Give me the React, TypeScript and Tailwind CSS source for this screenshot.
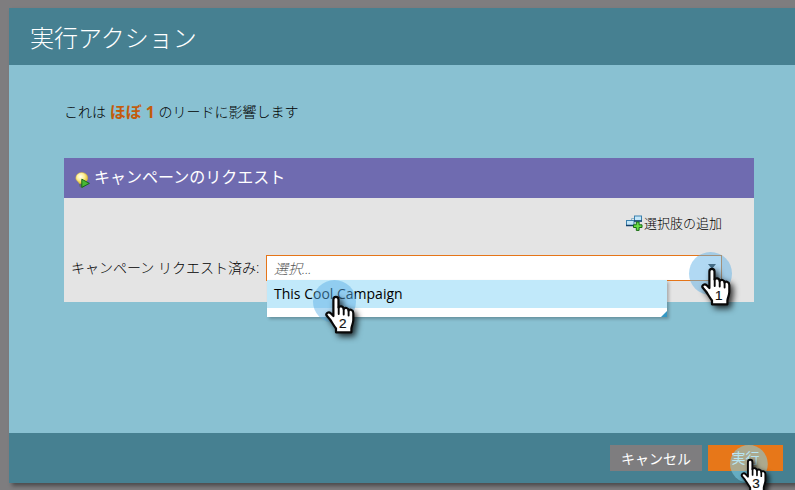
import React from "react";

const FONT = "font-['Open_Sans','Noto_Sans_CJK_JP',sans-serif]";

function Pointer({ step, className, small = false }: { step: string; className: string; small?: boolean }) {
  const size = small ? 58 : 66;
  return (
    <svg
      className={`pointer-events-none absolute overflow-visible ${className}`}
      width={size}
      height={size}
      viewBox="0 0 66 66"
      aria-hidden="true"
    >
      <circle cx="21.5" cy="21.5" r="21.5" fill={small ? "#7fd0ea" : "#5db0e6"} fillOpacity={small ? 0.56 : 0.48} />
      <g transform="translate(11 15)">
        <g className="drop-shadow-[3px_3px_3px_rgba(0,0,0,0.8)]">
          <path
            d="M9.4 21V4.5C9.4 1 14.5 1 14.5 4.5V12.5C15.5 10.6 19.4 11 19.6 14C21 12.2 24.3 12.7 24.6 15.6C26 14 29.3 14.6 29.3 18V25C29.3 28.5 27.6 30.5 27.4 33.5V37.3H12V33.5C9.5 30.5 7.8 27 6 24.5L2.8 20.8C1.2 18.5 4.5 16 6.7 18.2Z"
            fill="#fff"
            stroke="#080808"
            strokeWidth="2.2"
            strokeLinejoin="round"
          />
        </g>
        <path d="M14.7 12V19M19.7 14V19.5M24.6 15.5V20.5" fill="none" stroke="#080808" strokeWidth="1.9" strokeLinecap="round" />
        <text x="18.7" y={small ? 34 : 33} textAnchor="middle" fontSize={small ? 15.5 : 13.5} className="font-['Liberation_Sans',sans-serif]" fill="#111" stroke="#111" strokeWidth="0.2">
          {step}
        </text>
      </g>
    </svg>
  );
}

function BulbIcon() {
  return (
    <svg width="16" height="16" viewBox="0 0 16 16" className="shrink-0" aria-hidden="true">
      <defs>
        <radialGradient id="bulb" cx="40%" cy="38%" r="62%">
          <stop offset="0" stopColor="#fffff2" />
          <stop offset="0.5" stopColor="#fcf09a" />
          <stop offset="1" stopColor="#e3c02f" />
        </radialGradient>
      </defs>
      <path d="M4.200 10.500h5.300v3.800L8 15.700H6l-1.800-1.400z" fill="#656a72" />
      <path d="M6.700 .4a6 5.600 0 0 1 6 5.600c0 2.600-2 3.300-3 5.500H4.200C3.500 9.300 .8 8.600 .8 6A6 5.600 0 0 1 6.700 .4z" fill="url(#bulb)" stroke="#dbb93f" strokeWidth=".5" />
      <path d="M6.800 7.200l7.600 4.200-7.600 4z" fill="#48b835" stroke="#16681a" strokeWidth="1" />
    </svg>
  );
}

function AddChoiceIcon() {
  return (
    <svg width="17" height="16" viewBox="0 0 17 16" className="shrink-0" aria-hidden="true">
      <path d="M5.500 6V3.500H8" fill="none" stroke="#8fb3c8" />
      <rect x="8.500" y="1" width="7" height="5" fill="#c4e6f8" stroke="#3a80ad" />
      <rect x=".5" y="5.500" width="7.500" height="5" fill="#c4e6f8" stroke="#3a80ad" />
      <path d="M8 6h8M0 10.500h8" stroke="#123f69" strokeWidth="1.500" />
      <path d="M10.300 7h2.800v2.800H16v2.700h-2.900v2.900h-2.800v-2.900H7.500V9.800h2.800z" fill="#6bdd43" stroke="#176b14" />
    </svg>
  );
}

export default function App() {
  return (
    <div className={`relative h-[490px] w-[795px] overflow-hidden bg-[#7e7d7f] pl-[9px] pt-2 ${FONT}`}>
      <div className="flex h-[475px] w-[800px] flex-col bg-[#89c1d2] shadow-[3px_3px_4px_rgba(0,0,0,0.4)]">
        <header className="flex h-[57px] shrink-0 items-center bg-[#468091] pl-[21px] pt-[3px] text-white">
          <h1 className="text-[24px] font-light leading-9">実行アクション</h1>
        </header>

        <main className="flex-1 pl-[55px] pt-[35px] text-[14px] text-black">
          <p className="flex h-6 items-center whitespace-pre leading-6">
            <span className="font-light">これは </span>
            <strong className="text-[16px] font-bold text-[#c45b0b]">ほぼ 1</strong>
            <span className="font-light"> のリードに影響します</span>
          </p>

          <section className="mt-[34px] h-[144px] w-[690px] bg-[#e4e4e4]">
            <h2 className="flex h-10 items-center gap-[3px] bg-[#6f6bb0] pl-[11px] text-[16px] font-normal text-white">
              <span className="pt-[3px]"><BulbIcon /></span>
              <span className="pb-0.5">キャンペーンのリクエスト</span>
            </h2>
            <div className="flex h-[57px] items-start justify-end pr-8 pt-[15px]">
              <button className="flex h-5 items-center gap-px text-[13px] font-light leading-5">
                <AddChoiceIcon />
                選択肢の追加
              </button>
            </div>
            <div className="flex h-[26px] items-center pl-[7px]">
              <label className="w-[195px] shrink-0 whitespace-nowrap font-light leading-5">キャンペーン リクエスト済み:</label>
              <div className="relative flex h-[26px] w-[456px] items-center justify-between border border-[#e57519] bg-white pl-[7px] pr-[5px]">
                <span className="font-light italic text-[#555]">選択...</span>
                <span className="mb-[3px] h-0 w-0 border-x-4 border-t-[5px] border-x-transparent border-t-[#333]" />
                <div className="absolute left-0 top-6 w-[400px] bg-white pb-[9px] text-black shadow-[2px_2px_3px_rgba(0,0,0,0.25)]">
                  <div className="h-7 bg-[#c1e9fa] pl-[7px] leading-7">This Cool Campaign</div>
                  <span className="absolute bottom-0 right-0 h-0 w-0 border-b-[6px] border-l-[6px] border-b-[#3498c4] border-l-transparent" />
                </div>
              </div>
            </div>
          </section>
        </main>

        <footer className="flex h-[50px] shrink-0 items-start gap-[6px] bg-[#468091] pl-[601px] pt-3 text-[14px] text-white">
          <button className="h-[26px] w-[92px] bg-[#7e7d7f] leading-[25px]">キャンセル</button>
          <button className="h-[26px] w-[75px] bg-[#e77719] leading-[26px]">実行</button>
        </footer>
      </div>

      <Pointer step="1" className="left-[689px] top-[252px]" />
      <Pointer step="2" className="left-[313px] top-[280px]" />
      <Pointer step="3" small className="left-[730px] top-[445px]" />
    </div>
  );
}
